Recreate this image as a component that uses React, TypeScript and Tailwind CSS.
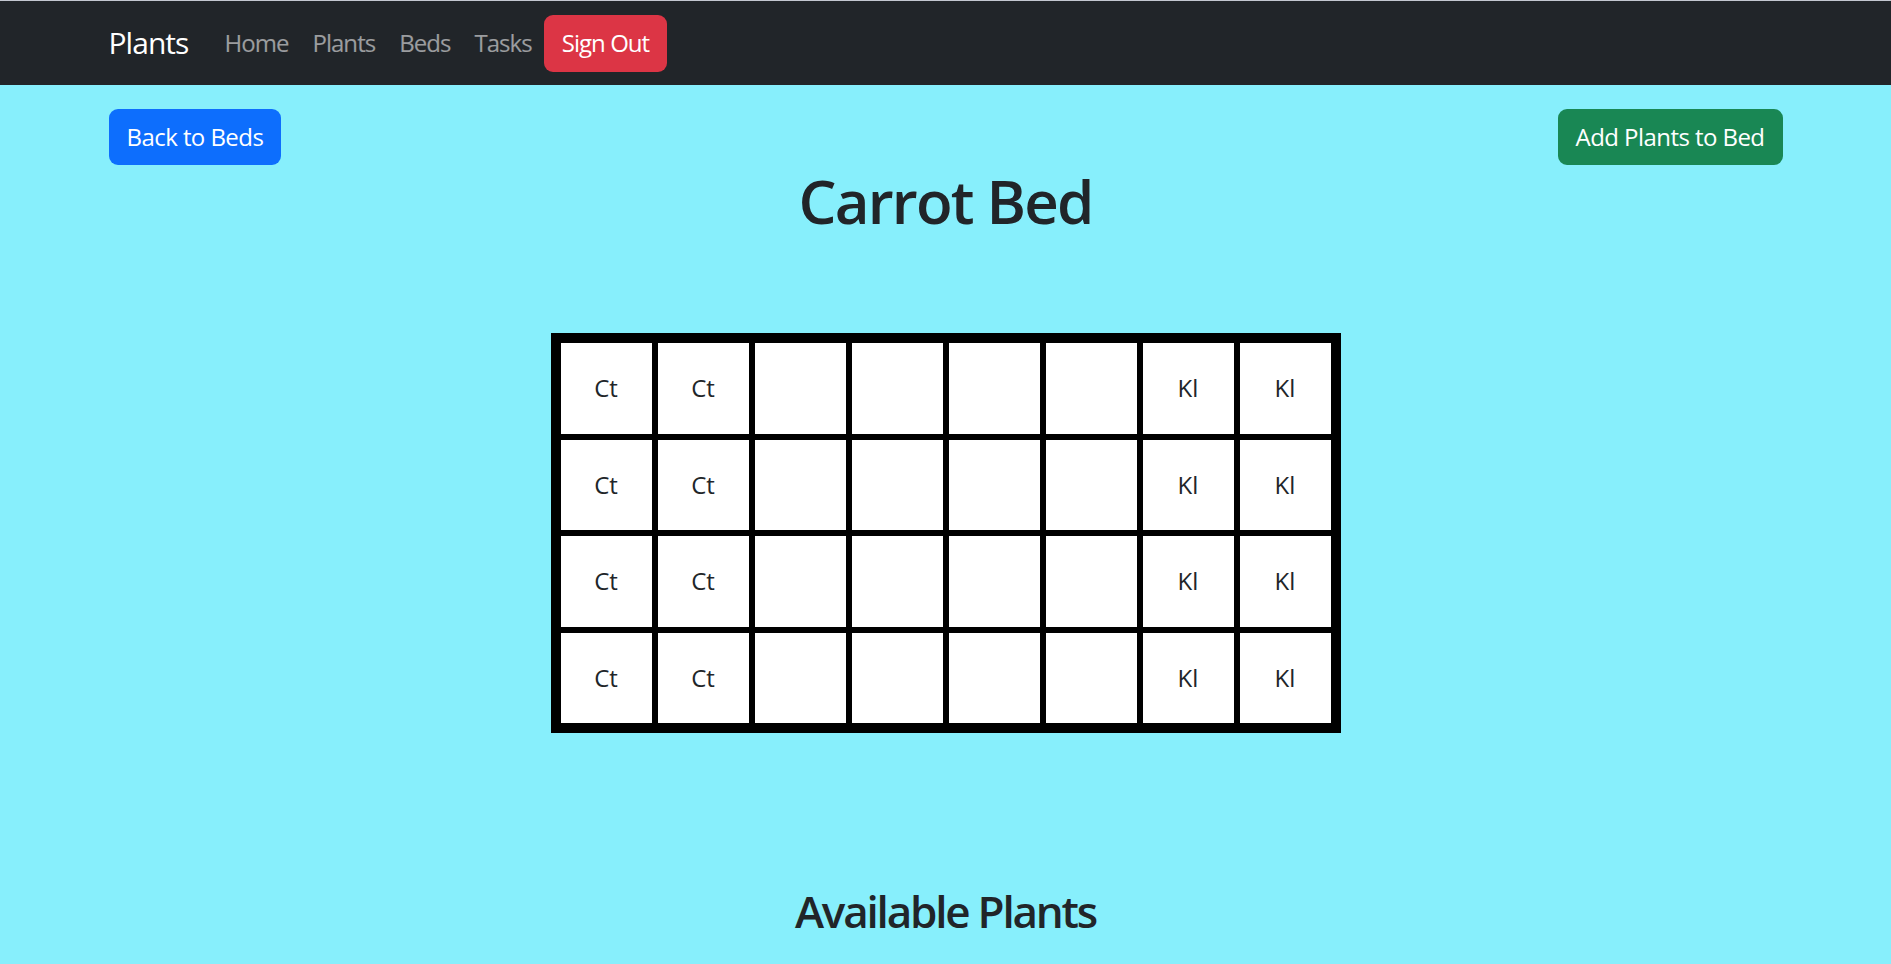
import React from "react";

const COLS = 8;
const ROWS = 4;

function cellLabel(col: number) {
  if (col < 2) return "Ct";
  if (col >= 6) return "Kl";
  return "";
}

export default function App() {
  const cells: { key: string; label: string }[] = [];
  for (let r = 0; r < ROWS; r++) {
    for (let c = 0; c < COLS; c++) {
      cells.push({ key: `${r}-${c}`, label: cellLabel(c) });
    }
  }

  return (
    <div
      className="min-h-screen bg-[#87effc] text-[#212529]"
      style={{ fontFamily: '"Open Sans", "Noto Sans", sans-serif' }}
    >
      {/* navbar */}
      <nav className="h-[85px] bg-[#212529] border-t border-[#c3c7d0]">
        <div className="mx-auto flex h-full w-[1710px] items-center px-[18px] tracking-[-0.06em]">
          <span className="mr-[24px] text-[30px] leading-none text-white">Plants</span>
          {["Home", "Plants", "Beds", "Tasks"].map((l) => (
            <span key={l} className="px-[12px] text-[24px] leading-none text-white/55">
              {l}
            </span>
          ))}
          <button className="h-[57px] rounded-[9px] bg-[#dc3545] px-[18px] text-[24px] text-white">
            Sign Out
          </button>
        </div>
      </nav>

      <div className="mx-auto w-[1710px] px-[18px]">
        <div className="mt-[24px] flex items-center justify-between tracking-[-0.035em]">
          <button className="h-[56px] rounded-[9px] bg-[#0d6efd] px-[18px] text-[24px] text-white">
            Back to Beds
          </button>
          <button className="h-[56px] rounded-[9px] bg-[#198754] px-[18px] text-[24px] text-white">
            Add Plants to Bed
          </button>
        </div>

        <h1 className="text-center text-[60px] font-semibold leading-[1.2] tracking-[-0.03em]">
          Carrot Bed
        </h1>

        <div className="mt-[96px] flex justify-center">
          <div className="grid grid-cols-[repeat(8,91px)] grid-rows-[repeat(4,90.5px)] gap-[6px] bg-black p-[10px]">
            {cells.map((c) => (
              <div key={c.key} className="flex items-center justify-center bg-white text-[24px]">
                {c.label}
              </div>
            ))}
          </div>
        </div>

        <h2 className="mt-[152px] pb-[40px] text-center text-[44px] font-semibold leading-[1.2] tracking-[-0.05em]">
          Available Plants
        </h2>
      </div>
    </div>
  );
}
